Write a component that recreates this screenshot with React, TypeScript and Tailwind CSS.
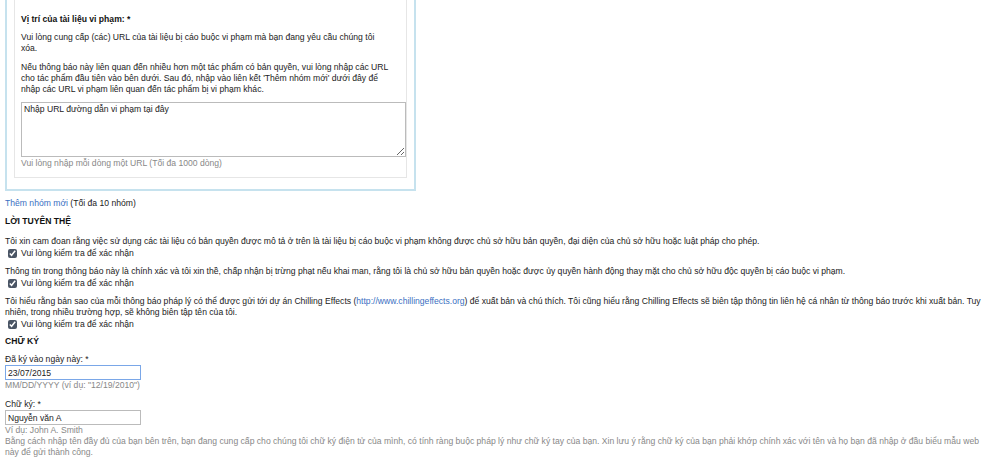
import React from 'react';

const Check: React.FC = () => (
  <label className="flex items-center gap-[4px] pl-[3px] h-[12px]">
    <input type="checkbox" defaultChecked className="w-[9px] h-[9px] m-0 accent-gray-600" />
    <span>Vui lòng kiểm tra để xác nhận</span>
  </label>
);

const App: React.FC = () => {
  return (
    <div className="w-[1000px] h-[457px] overflow-hidden bg-white text-[#222] text-[8.6px] leading-[11px]" style={{ fontFamily: '"Liberation Sans", Arial, sans-serif' }}>
      <div className="pl-[5px] pr-[10px]">
        {/* URL group */}
        <div className="w-[411px] -mt-[2px] border-2 border-t-0 border-[#c6e2ee] px-[7px] pb-[11px]">
          <div className="border border-t-0 border-[#e6e6e6] px-[6px] pt-[16px] pb-[8px]">
            <div className="font-bold text-[#111]">Vị trí của tài liệu vi phạm: *</div>
            <p className="mt-[7px] w-[368px]">Vui lòng cung cấp (các) URL của tài liệu bị cáo buộc vi phạm mà bạn đang yêu cầu chúng tôi xóa.</p>
            <p className="mt-[8px] w-[375px]">Nếu thông báo này liên quan đến nhiều hơn một tác phẩm có bản quyền, vui lòng nhập các URL cho tác phẩm đầu tiên vào bên dưới. Sau đó, nhập vào liên kết 'Thêm nhóm mới' dưới đây để nhập các URL vi phạm liên quan đến tác phẩm bị vi phạm khác.</p>
            <textarea
              className="mt-[7px] block w-[385px] h-[55px] border border-[#bbb] px-[2px] py-[1px] text-[8.6px] resize-y outline-none"
              style={{ fontFamily: '"Liberation Sans", Arial, sans-serif' }}
              defaultValue="Nhập URL đường dẫn vi phạm tại đây"
            />
            <div className="mt-[1px] text-[#888]">Vui lòng nhập mỗi dòng một URL (Tối đa 1000 dòng)</div>
          </div>
        </div>

        <div className="mt-[7px]">
          <a className="text-[#3a6fc2]">Thêm nhóm mới</a> (Tối đa 10 nhóm)
        </div>

        <div className="mt-[7px] font-bold text-[#111]">LỜI TUYÊN THỆ</div>

        <p className="mt-[9px]">Tôi xin cam đoan rằng việc sử dụng các tài liệu có bản quyền được mô tả ở trên là tài liệu bị cáo buộc vi phạm không được chủ sở hữu bản quyền, đại diện của chủ sở hữu hoặc luật pháp cho phép.</p>
        <Check />

        <p className="mt-[7px]">Thông tin trong thông báo này là chính xác và tôi xin thề, chấp nhận bị trừng phạt nếu khai man, rằng tôi là chủ sở hữu bản quyền hoặc được ủy quyền hành động thay mặt cho chủ sở hữu độc quyền bị cáo buộc vi phạm.</p>
        <Check />

        <p className="mt-[7px]">Tôi hiểu rằng bản sao của mỗi thông báo pháp lý có thể được gửi tới dự án Chilling Effects (<span className="text-[#3a6fc2]">http://www.chillingeffects.org</span>) để xuất bản và chú thích. Tôi cũng hiểu rằng Chilling Effects sẽ biên tập thông tin liên hệ cá nhân từ thông báo trước khi xuất bản. Tuy nhiên, trong nhiều trường hợp, sẽ không biên tập tên của tôi.</p>
        <Check />

        <div className="mt-[6px] font-bold text-[#111]">CHỮ KÝ</div>

        <div className="mt-[7px]">Đã ký vào ngày này: *</div>
        <input
          className="block w-[136px] h-[15px] border border-[#7aa7e8] px-[2px] text-[8.6px] outline-none"
          style={{ fontFamily: '"Liberation Sans", Arial, sans-serif' }}
          defaultValue="23/07/2015"
        />
        <div className="text-[#888]">MM/DD/YYYY (ví dụ: "12/19/2010")</div>

        <div className="mt-[8px]">Chữ ký: *</div>
        <input
          className="block w-[136px] h-[15px] border border-[#bbb] px-[2px] text-[8.6px] outline-none"
          style={{ fontFamily: '"Liberation Sans", Arial, sans-serif' }}
          defaultValue="Nguyễn văn A"
        />
        <div className="text-[#888]">Ví dụ: John A. Smith</div>
        <p className="text-[#888] w-[985px]">Bằng cách nhập tên đầy đủ của bạn bên trên, bạn đang cung cấp cho chúng tôi chữ ký điện tử của mình, có tính ràng buộc pháp lý như chữ ký tay của bạn. Xin lưu ý rằng chữ ký của bạn phải khớp chính xác với tên và họ bạn đã nhập ở đầu biểu mẫu web này để gửi thành công.</p>
      </div>
    </div>
  );
};

export default App;
